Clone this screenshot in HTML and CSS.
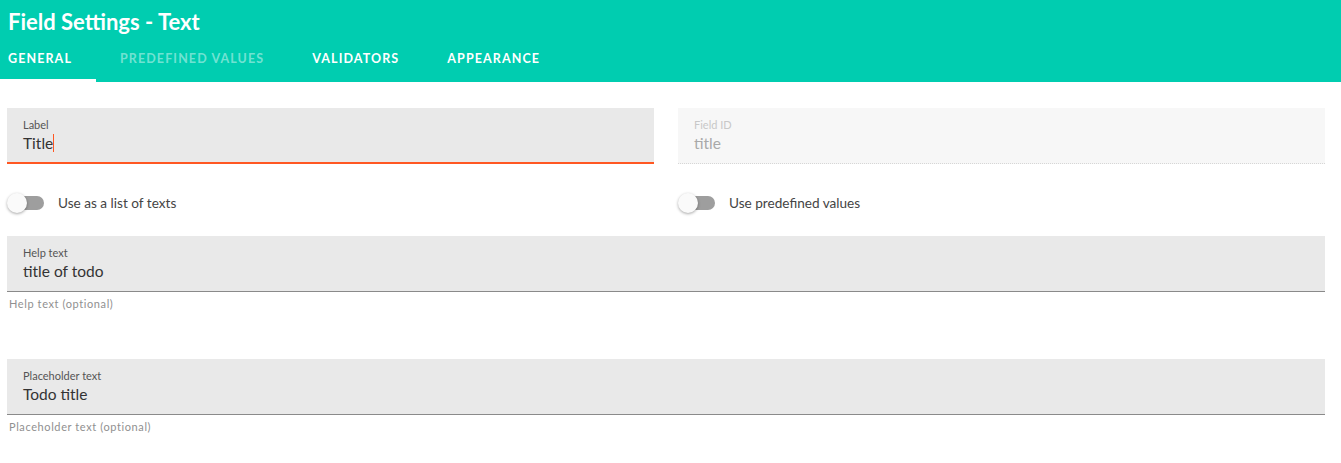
FILE: index.html
```html
<!DOCTYPE html>
<html>
<head>
<meta charset="utf-8">
<link rel="stylesheet" href="styles.css">
</head>
<body>
<header class="header">
  <h1 class="title">Field Settings - Text</h1>
  <nav class="tabs">
    <div class="tab active">GENERAL</div>
    <div class="tab disabled">PREDEFINED VALUES</div>
    <div class="tab">VALIDATORS</div>
    <div class="tab">APPEARANCE</div>
  </nav>
</header>
<main class="content">
  <div class="row two">
    <div class="col">
      <div class="field focused">
        <div class="field-label">Label</div>
        <div class="field-value">Title<span class="caret"></span></div>
      </div>
      <div class="toggle-row">
        <span class="toggle"><span class="track"></span><span class="thumb"></span></span>
        <span class="toggle-label">Use as a list of texts</span>
      </div>
    </div>
    <div class="col">
      <div class="field disabled-field">
        <div class="field-label">Field ID</div>
        <div class="field-value">title</div>
      </div>
      <div class="toggle-row">
        <span class="toggle"><span class="track"></span><span class="thumb"></span></span>
        <span class="toggle-label">Use predefined values</span>
      </div>
    </div>
  </div>
  <div class="block">
    <div class="field">
      <div class="field-label">Help text</div>
      <div class="field-value">title of todo</div>
    </div>
    <div class="helper">Help text (optional)</div>
  </div>
  <div class="block">
    <div class="field">
      <div class="field-label">Placeholder text</div>
      <div class="field-value">Todo title</div>
    </div>
    <div class="helper">Placeholder text (optional)</div>
  </div>
</main>
</body>
</html>
```

FILE: styles.css
```css
* { box-sizing: border-box; }
html, body { margin: 0; padding: 0; background: #fff; }
body {
  font-family: Lato, "Noto Sans", sans-serif;
  color: #333;
  width: 1341px;
  height: 463px;
  overflow: hidden;
}
.header {
  background: #00cdb0;
  height: 82px;
  display: flex;
  flex-direction: column;
}
.title {
  margin: 0;
  padding: 8px 0 0 8px;
  font-size: 22px;
  font-weight: 700;
  color: #fff;
  line-height: 27px;
  height: 40px;
}
.tabs {
  display: flex;
  height: 42px;
}
.tab {
  font-size: 12.5px;
  font-weight: 700;
  letter-spacing: 1.1px;
  color: #fff;
  padding: 0 24px;
  line-height: 38px;
  border-bottom: 3px solid transparent;
}
.tab:first-child { padding-left: 8px; }
.tab.active { border-bottom-color: #fff; }
.tab.disabled { color: rgba(255,255,255,0.45); }
.content {
  padding: 26px 16px 0 7px;
}
.row.two {
  display: grid;
  grid-template-columns: 1fr 1fr;
  column-gap: 24px;
}
.field {
  background: #e9e9e9;
  height: 56px;
  padding: 10px 16px 0 16px;
  border-bottom: 1px solid #8a8a8a;
}
.field.focused { border-bottom: 2px solid #ff5722; }
.field.disabled-field {
  background: #f7f7f7;
  border-bottom: 1px dotted #d6d6d6;
}
.field-label {
  font-size: 11px;
  line-height: 13px;
  color: #555;
}
.field-value {
  font-size: 15.5px;
  line-height: 22px;
  margin-top: 1px;
  color: #333;
  display: flex;
  align-items: center;
}
.disabled-field .field-label { color: #c8c8c8; }
.disabled-field .field-value { color: #a9a9a9; }
.caret {
  display: inline-block;
  width: 1px;
  height: 18px;
  background: #ff5722;
}
.toggle-row {
  display: flex;
  align-items: center;
  height: 72px;
  padding-top: 5px;
}
.toggle {
  position: relative;
  width: 38px;
  height: 20px;
  margin-right: 13px;
}
.track {
  position: absolute;
  left: 3px;
  top: 3px;
  width: 34px;
  height: 14px;
  border-radius: 7px;
  background: #9e9e9e;
}
.thumb {
  position: absolute;
  left: 0;
  top: 0;
  width: 20px;
  height: 20px;
  border-radius: 50%;
  background: #fafafa;
  box-shadow: 0 1px 3px rgba(0,0,0,0.35);
}
.toggle-label {
  font-size: 13.6px;
  color: #444;
}
.block {
  margin-bottom: 11px;
}
.helper {
  font-size: 11px;
  color: #909090;
  padding: 5px 0 0 2px;
  height: 56px;
  letter-spacing: 0.6px;
}
```
